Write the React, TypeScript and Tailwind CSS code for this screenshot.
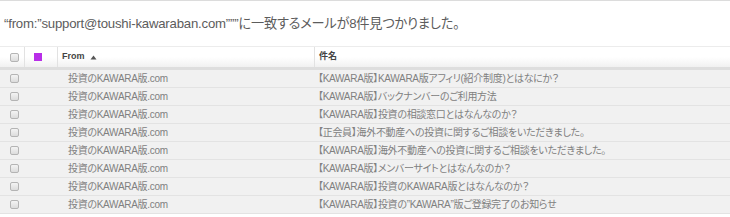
import React from "react";

const rows = [
  "【KAWARA版】KAWARA版アフィリ(紹介制度)とはなにか？",
  "【KAWARA版】バックナンバーのご利用方法",
  "【KAWARA版】投資の相談窓口とはなんなのか？",
  "【正会員】海外不動産への投資に関するご相談をいただきました。",
  "【KAWARA版】海外不動産への投資に関するご相談をいただきました。",
  "【KAWARA版】メンバーサイトとはなんなのか？",
  "【KAWARA版】投資のKAWARA版とはなんなのか？",
  "【KAWARA版】投資の”KAWARA”版ご登録完了のお知らせ",
];

function Box() {
  return (
    <div className="w-[9px] h-[9px] rounded-[2px] border border-[#b4b4b4] bg-gradient-to-b from-[#f4f4f4] to-[#dcdcdc]" />
  );
}

export default function App() {
  return (
    <div
      className="w-[730px] h-[217px] bg-white border-t border-[#dcdcdc] overflow-hidden [font-feature-settings:'palt']"
      style={{ fontFamily: '"Liberation Sans", "Noto Sans CJK JP", sans-serif' }}
    >
      <div className="h-[45px] pl-[4px] flex items-center text-[13.2px] text-[#5c5c5c] tracking-[-0.2px]">
        “from:”support@toushi-kawaraban.com”””に一致するメールが8件見つかりました。
      </div>
      <div className="grid grid-cols-[25px_33px_257px_1fr] h-[24px] border-t border-[#ececec] border-b-[3px] border-b-[#dedede] bg-gradient-to-b from-white via-white to-[#f1f1f1]">
        <div className="flex items-center pl-[10px] border-r border-[#e2e2e2]">
          <Box />
        </div>
        <div className="flex items-center pl-[9px] border-r border-[#e2e2e2]">
          <div className="w-[8px] h-[8px] bg-[#b82ee8]" />
        </div>
        <div className="flex items-center pl-[4px] border-r border-[#e2e2e2] text-[9px] font-bold text-[#444] gap-[5px]">
          <span>From</span>
          <svg width="7" height="5" viewBox="0 0 7 5">
            <path d="M3.5 0.5 L6.5 4.5 L0.5 4.5 Z" fill="#555" />
          </svg>
        </div>
        <div className="flex items-center pl-[4px] text-[9px] font-bold text-[#444]">
          件名
        </div>
      </div>
      {rows.map((s, i) => (
        <div
          key={i}
          className="grid grid-cols-[25px_33px_257px_1fr] h-[18px] bg-[#f1f1f1] border-b border-[#e3e3e3] text-[10px] text-[#808080] tracking-[-0.3px]"
        >
          <div className="flex items-center pl-[10px]">
            <Box />
          </div>
          <div />
          <div className="flex items-center pl-[10px] whitespace-nowrap">投資のKAWARA版.com</div>
          <div className="flex items-center pl-[3px] whitespace-nowrap">{s}</div>
        </div>
      ))}
    </div>
  );
}
